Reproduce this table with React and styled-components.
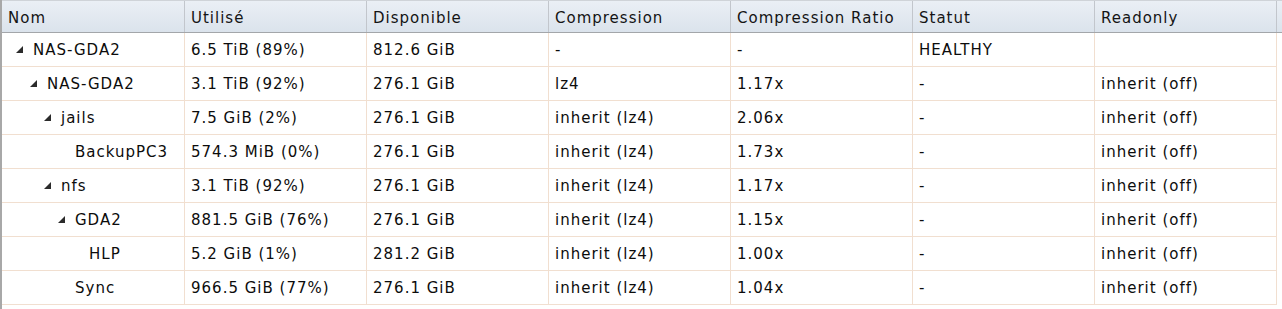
import styled, { createGlobalStyle } from "styled-components";

const GlobalStyle = createGlobalStyle`
  html, body {
    margin: 0;
    padding: 0;
    background: #ffffff;
  }
`;

const columns = [
  "Nom",
  "Utilisé",
  "Disponible",
  "Compression",
  "Compression Ratio",
  "Statut",
  "Readonly",
];

const rows = [
  { level: 0, open: true, name: "NAS-GDA2", used: "6.5 TiB (89%)", avail: "812.6 GiB", comp: "-", ratio: "-", status: "HEALTHY", ro: "" },
  { level: 1, open: true, name: "NAS-GDA2", used: "3.1 TiB (92%)", avail: "276.1 GiB", comp: "lz4", ratio: "1.17x", status: "-", ro: "inherit (off)" },
  { level: 2, open: true, name: "jails", used: "7.5 GiB (2%)", avail: "276.1 GiB", comp: "inherit (lz4)", ratio: "2.06x", status: "-", ro: "inherit (off)" },
  { level: 3, name: "BackupPC3", used: "574.3 MiB (0%)", avail: "276.1 GiB", comp: "inherit (lz4)", ratio: "1.73x", status: "-", ro: "inherit (off)" },
  { level: 2, open: true, name: "nfs", used: "3.1 TiB (92%)", avail: "276.1 GiB", comp: "inherit (lz4)", ratio: "1.17x", status: "-", ro: "inherit (off)" },
  { level: 3, open: true, name: "GDA2", used: "881.5 GiB (76%)", avail: "276.1 GiB", comp: "inherit (lz4)", ratio: "1.15x", status: "-", ro: "inherit (off)" },
  { level: 4, name: "HLP", used: "5.2 GiB (1%)", avail: "281.2 GiB", comp: "inherit (lz4)", ratio: "1.00x", status: "-", ro: "inherit (off)" },
  { level: 3, name: "Sync", used: "966.5 GiB (77%)", avail: "276.1 GiB", comp: "inherit (lz4)", ratio: "1.04x", status: "-", ro: "inherit (off)" },
];

const Grid = styled.div`
  min-height: 100vh;
  box-sizing: border-box;
  border-left: 2px solid #a8a8a8;
  font-family: "DejaVu Sans", Verdana, sans-serif;
  font-size: 15px;
  letter-spacing: 1px;
  color: #0c0c0c;
`;

const Row = styled.div`
  display: grid;
  grid-template-columns: 183px repeat(6, 182px) 1fr;
`;

const HeaderRow = styled(Row)`
  height: 33px;
  box-sizing: border-box;
  border-top: 1px solid #cfd3d8;
  border-bottom: 1px solid #a3a6aa;
  background: linear-gradient(to bottom, #eaeff5, #dbe3ec);
`;

const HeaderCell = styled.div`
  display: flex;
  align-items: center;
  padding: 2px 6px 0;
  border-right: 1px solid #c2c6cc;
  white-space: nowrap;
  overflow: hidden;
  color: #141414;
`;

const Filler = styled.div``;

const BodyRow = styled(Row)`
  height: 34px;
  box-sizing: border-box;
`;

const Cell = styled.div`
  display: flex;
  align-items: center;
  padding: 0 6px;
  border-right: 1px solid #f1dfd0;
  border-bottom: 1px solid #f1dfd0;
  white-space: nowrap;
  overflow: hidden;
`;

const NameCell = styled(Cell)`
  padding-left: ${(p) => 14 + p.$level * 14}px;
`;

const Toggle = styled.svg`
  width: 7px;
  height: 7px;
  margin-right: 10px;
  flex-shrink: 0;
  visibility: ${(p) => (p.$hidden ? "hidden" : "visible")};
`;

function Triangle({ hidden }) {
  return (
    <Toggle $hidden={hidden} viewBox="0 0 7 7">
      <polygon points="7,0 7,7 0,7" fill="#2b2b2b" />
    </Toggle>
  );
}

export default function App() {
  return (
    <>
      <GlobalStyle />
      <Grid>
        <HeaderRow>
          {columns.map((c) => (
            <HeaderCell key={c}>{c}</HeaderCell>
          ))}
          <Filler />
        </HeaderRow>
        {rows.map((r, i) => (
          <BodyRow key={i}>
            <NameCell $level={r.level}>
              <Triangle hidden={!r.open} />
              {r.name}
            </NameCell>
            <Cell>{r.used}</Cell>
            <Cell>{r.avail}</Cell>
            <Cell>{r.comp}</Cell>
            <Cell>{r.ratio}</Cell>
            <Cell>{r.status}</Cell>
            <Cell>{r.ro}</Cell>
            <Filler />
          </BodyRow>
        ))}
      </Grid>
    </>
  );
}
